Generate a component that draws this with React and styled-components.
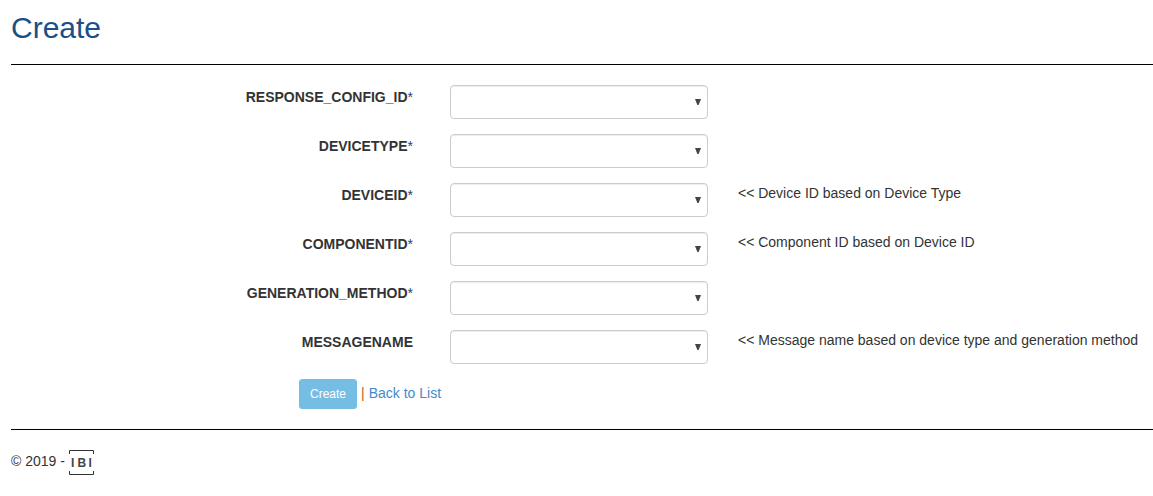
import React from "react";
import styled, { createGlobalStyle } from "styled-components";

const fields = [
	{ name: "RESPONSE_CONFIG_ID", required: true },
	{ name: "DEVICETYPE", required: true },
	{
		name: "DEVICEID",
		required: true,
		hint: "<< Device ID based on Device Type",
	},
	{
		name: "COMPONENTID",
		required: true,
		hint: "<< Component ID based on Device ID",
	},
	{ name: "GENERATION_METHOD", required: true },
	{
		name: "MESSAGENAME",
		hint: "<< Message name based on device type and generation method",
	},
];

function Field({ name, required, hint }) {
	return (
		<Row>
			<Label htmlFor={name}>
				{name}
				{required && <span>*</span>}
			</Label>
			<SelectBox>
				<select id={name} name={name} defaultValue="">
					<option value="" aria-label="None" />
				</select>
				<svg width="6" height="6" viewBox="0 0 6 6" aria-hidden="true">
					<path d="M0 0h6L3.600 6H2.400z" fill="#444" />
				</svg>
			</SelectBox>
			{hint && <Hint>{hint}</Hint>}
		</Row>
	);
}

function Logo() {
	return (
		<svg width="25" height="25" viewBox="0 0 25 25" role="img" aria-label="IBI">
			<path
				d="M.5 4V.5h24V4M.5 21v3.500h24V21"
				fill="none"
				stroke="#333"
				strokeWidth="1"
			/>
			<text x="2 8.500 19.500" y="17" fontSize="12" fontWeight="bold" fill="#444">
				IBI
			</text>
		</svg>
	);
}

export default function App() {
	return (
		<Page>
			<GlobalStyle />
			<h1>Create</h1>
			<hr />
			<form onSubmit={(e) => e.preventDefault()}>
				{fields.map((field) => (
					<Field key={field.name} {...field} />
				))}
				<Actions>
					<CreateButton type="submit">Create</CreateButton>
					<Divider>|</Divider>
					<a href="#list">Back to List</a>
				</Actions>
			</form>
			<hr />
			<Footer>
				<span>© 2019 -</span>
				<Logo />
			</Footer>
		</Page>
	);
}

const GlobalStyle = createGlobalStyle`
	* {
		box-sizing: border-box;
	}

	body {
		margin: 0;
		background: #fff;
		color: #333;
		font-family: "Liberation Sans", Arial, sans-serif;
		font-size: 14px;
		line-height: 20px;
	}
`;

const Page = styled.main`
	padding-left: 11px;

	h1 {
		margin: 0;
		padding: 11px 0 19px;
		color: #1a4f87;
		font-size: 30px;
		font-weight: normal;
		line-height: 34px;
	}

	hr {
		margin: 0 0 20px;
		border: 0;
		border-top: 1px solid #000;
	}

	a {
		color: #428bca;
		text-decoration: none;
	}
`;

const Row = styled.div`
	display: grid;
	grid-template-columns: minmax(0, 68fr) 258px minmax(0, 69fr);
	column-gap: 30px;
	margin-bottom: 15px;
`;

const Label = styled.label`
	padding: 2px 7px 0 0;
	font-weight: bold;
	text-align: right;

	span {
		color: #1f3f6b;
		font-weight: normal;
	}
`;

const SelectBox = styled.div`
	position: relative;

	select {
		display: block;
		appearance: none;
		width: 100%;
		height: 34px;
		padding: 6px 12px;
		border: 1px solid #ccc;
		border-radius: 4px;
		background: #fff;
		box-shadow: inset 0 1px 1px rgba(0, 0, 0, 0.075);
		color: #555;
		font: inherit;
	}

	svg {
		position: absolute;
		top: 14px;
		right: 7px;
		pointer-events: none;
	}
`;

const Hint = styled.span`
	white-space: nowrap;
`;

const Actions = styled.div`
	display: flex;
	align-items: baseline;
	gap: 4px;
	margin-bottom: 20px;
	padding-left: 288px;
`;

const CreateButton = styled.button`
	height: 30px;
	padding: 5px 10px;
	border: 1px solid #76bde4;
	border-radius: 3px;
	background: #76bde4;
	color: #fff;
	font-family: inherit;
	font-size: 12px;
	line-height: 18px;
`;

const Divider = styled.span`
	color: #b5651d;
`;

const Footer = styled.footer`
	display: flex;
	align-items: flex-start;
	gap: 4px;
	line-height: 22px;
`;
